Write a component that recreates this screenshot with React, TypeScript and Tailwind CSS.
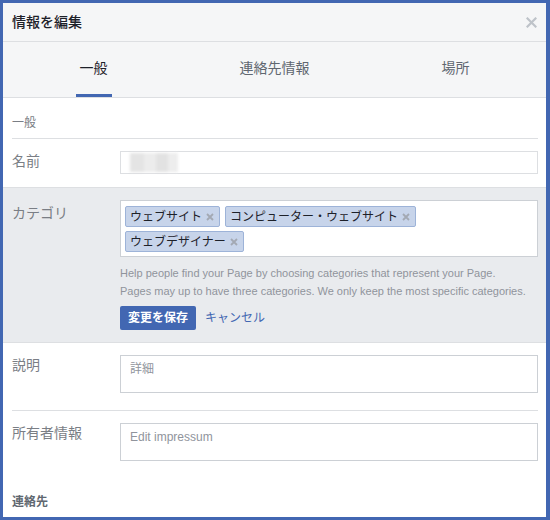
import React from 'react';

// Shared font stack: Arial-width Latin, Japanese fallback
const font = "font-['Liberation_Sans','Noto_Sans_CJK_JP',sans-serif]";

const tabs = ['一般', '連絡先情報', '場所'];
const categories = ['ウェブサイト', 'コンピューター・ウェブサイト', 'ウェブデザイナー'];

const CloseIcon: React.FC = () => (
  <svg width="11" height="11" viewBox="0 0 11 11" className="block">
    <path d="M1.5 1.5 L9.5 9.5 M9.5 1.5 L1.5 9.5" stroke="#bec3c9" strokeWidth="2.2" strokeLinecap="square" />
  </svg>
);

const TagX: React.FC = () => (
  <svg width="8" height="8" viewBox="0 0 8 8" className="block">
    <path d="M1 1 L7 7 M7 1 L1 7" stroke="#a3a9b3" strokeWidth="1.8" />
  </svg>
);

const Tag: React.FC<{ label: string }> = ({ label }) => (
  <span className="flex h-[21px] items-center gap-[4px] rounded-[2px] border border-[#9db3d8] bg-[#c7d4ea] pl-[4px] pr-[5px] text-[12px] leading-none text-[#1d2129]">
    {label}
    <TagX />
  </span>
);

const Row: React.FC<{ label: string; children: React.ReactNode; divider?: boolean }> = ({
  label,
  children,
  divider = true,
}) => (
  <div className="pl-[9px] pr-[8px]">
    <div className={`flex pt-[12px] ${divider ? 'border-b border-[#dddfe2] pb-[17px]' : ''}`}>
      <div className="w-[108px] shrink-0 text-[14px] leading-5 text-[#7a7e85]">{label}</div>
      <div className="flex-1">{children}</div>
    </div>
  </div>
);

export default function App() {
  return (
    <div className={`h-[520px] w-[550px] overflow-hidden bg-[#4267b2] pb-[3px] pl-[3px] pr-[4px] pt-[3px] ${font}`}>
      <div className="flex h-full flex-col overflow-hidden bg-white">
        {/* Header */}
        <div className="flex h-[39px] shrink-0 items-center justify-between border-b border-[#dddfe2] bg-[#f5f6f7] pl-[9px] pr-[9px]">
          <span className="text-[14px] font-medium leading-5 text-[#1d2129]">情報を編集</span>
          <CloseIcon />
        </div>

        {/* Tabs */}
        <div className="grid h-[56px] shrink-0 grid-cols-3 border-b border-[#dddfe2] bg-[#f5f6f7]">
          {tabs.map((t, i) => (
            <div key={t} className="relative flex justify-center pt-[16px]">
              <span className={`text-[14px] leading-5 ${i === 0 ? 'text-[#1d2129]' : 'text-[#606770]'}`}>{t}</span>
              {i === 0 && <span className="absolute bottom-0 left-1/2 h-[3px] w-[36px] -translate-x-1/2 bg-[#4267b2]" />}
            </div>
          ))}
        </div>

        {/* Section heading */}
        <div className="pl-[9px] pr-[8px]">
          <div className="border-b border-[#dddfe2] pb-[7px] pt-[17px] text-[12px] leading-4 text-[#7a7e85]">一般</div>
        </div>

        {/* Name */}
        <div className="pl-[9px] pr-[8px]">
          <div className="flex pb-[13px] pt-[12px]">
            <div className="w-[108px] shrink-0 text-[14px] leading-5 text-[#7a7e85]">名前</div>
            <div className="flex h-[23px] flex-1 items-center border border-[#dddfe2] bg-white pl-[9px]">
              <div className="flex h-[19px] blur-[1.5px]">
                <span className="h-full w-[14px] bg-[#e4e4e4]" />
                <span className="h-full w-[12px] bg-[#ececec]" />
                <span className="h-full w-[12px] bg-[#e2e2e2]" />
                <span className="h-full w-[10px] bg-[#ededed]" />
              </div>
            </div>
          </div>
        </div>

        {/* Category (editing) */}
        <div className="border-y border-[#dddfe2] bg-[#e9ebee] pb-[12px] pl-[9px] pr-[8px] pt-[12px]">
          <div className="flex">
            <div className="mt-[3px] w-[108px] shrink-0 text-[14px] leading-5 text-[#7a7e85]">カテゴリ</div>
            <div className="flex-1">
              <div className="flex flex-wrap gap-x-[5px] gap-y-[4px] border border-[#ccd0d5] bg-white pb-[4px] pl-[4px] pr-[4px] pt-[5px]">
                {categories.map((c) => (
                  <Tag key={c} label={c} />
                ))}
              </div>
              <p className="mt-[7px] text-[11px] leading-[18px] text-[#90949c]">
                Help people find your Page by choosing categories that represent your Page.
                <br />
                Pages may up to have three categories. We only keep the most specific categories.
              </p>
              <div className="mt-[6px] flex items-center gap-[9px]">
                <button className="h-[24px] rounded-[2px] bg-[#4267b2] px-[8px] text-[12px] font-bold leading-none text-white">
                  変更を保存
                </button>
                <span className="text-[12px] text-[#4267b2]">キャンセル</span>
              </div>
            </div>
          </div>
        </div>

        {/* Description */}
        <Row label="説明">
          <div className="h-[38px] border border-[#ccd0d5] bg-white px-[9px] pt-[5px] text-[12px] leading-4 text-[#90949c]">詳細</div>
        </Row>

        {/* Impressum */}
        <Row label="所有者情報" divider={false}>
          <div className="h-[38px] border border-[#ccd0d5] bg-white px-[9px] pt-[5px] text-[12px] leading-4 text-[#90949c]">
            Edit impressum
          </div>
        </Row>

        {/* Contact heading */}
        <div className="pl-[9px] pt-[33px] text-[12px] font-bold leading-4 text-[#606770]">連絡先</div>
      </div>
    </div>
  );
}
